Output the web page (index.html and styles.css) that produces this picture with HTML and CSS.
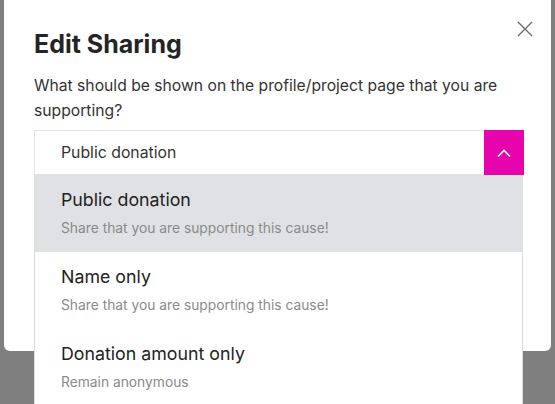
FILE: index.html
```html
<!DOCTYPE html>
<html lang="en">
<head>
    <meta charset="UTF-8">
    <meta name="viewport" content="width=device-width, initial-scale=1.0">
    <title>Edit Sharing</title>
    <link rel="stylesheet" href="styles.css">
</head>
<body>
    <div class="modal">
        <button class="close-btn" aria-label="Close">
            <svg width="16" height="16" viewBox="0 0 16 16">
                <path d="M1 1 L15 15 M15 1 L1 15" stroke="#6b6b6b" stroke-width="1.4" fill="none"/>
            </svg>
        </button>
        <h2 class="modal-title">Edit Sharing</h2>
        <p class="modal-text">What should be shown on the profile/project page that you are supporting?</p>

        <div class="select">
            <div class="select-control">
                <span class="select-value">Public donation</span>
                <span class="select-toggle">
                    <svg width="16" height="10" viewBox="0 0 16 10">
                        <path d="M2 8.5 L8 2.5 L14 8.5" stroke="#ffffff" stroke-width="1.6" fill="none"/>
                    </svg>
                </span>
            </div>
            <ul class="select-menu">
                <li class="option selected">
                    <div class="option-title">Public donation</div>
                    <div class="option-desc">Share that you are supporting this cause!</div>
                </li>
                <li class="option">
                    <div class="option-title">Name only</div>
                    <div class="option-desc">Share that you are supporting this cause!</div>
                </li>
                <li class="option">
                    <div class="option-title">Donation amount only</div>
                    <div class="option-desc">Remain anonymous</div>
                </li>
            </ul>
        </div>
    </div>
</body>
</html>
```

FILE: styles.css
```css
body {
    font-family: Inter, "Noto Sans", sans-serif;
    margin: 0;
    padding: 0;
    background-color: #7f7f7f;
    height: 404px;
    overflow: hidden;
}

.modal {
    position: relative;
    margin: 0 4px;
    width: 547px;
    height: 351px;
    box-sizing: border-box;
    padding: 30px 30px 0 30px;
    background-color: #ffffff;
    border-radius: 0 0 6px 6px;
}

.close-btn {
    position: absolute;
    top: 20px;
    right: 17px;
    width: 18px;
    height: 18px;
    padding: 0;
    border: none;
    background: none;
    cursor: pointer;
    display: flex;
    align-items: center;
    justify-content: center;
}

.modal-title {
    margin: 0;
    font-size: 25px;
    line-height: 28px;
    font-weight: 700;
    color: #242426;
}

.modal-text {
    margin: 15px 0 7px 0;
    font-size: 15.7px;
    line-height: 25px;
    color: #333333;
}

.select {
    position: relative;
    width: 490px;
}

.select-control {
    display: flex;
    height: 45px;
    box-sizing: border-box;
    border: 1px solid #e3e3e3;
    border-right: none;
}

.select-value {
    flex: 1;
    display: flex;
    align-items: center;
    padding-left: 26px;
    font-size: 15.8px;
    color: #333333;
}

.select-toggle {
    width: 40px;
    margin: -1px 0;
    background-color: #e605ac;
    display: flex;
    align-items: center;
    justify-content: center;
}

.select-menu {
    position: absolute;
    top: 45px;
    left: 0;
    width: 489px;
    margin: 0;
    padding: 0;
    list-style: none;
    background-color: #ffffff;
    border-left: 1px solid #dcdcdc;
    border-right: 1px solid #dcdcdc;
    box-sizing: border-box;
}

.option {
    height: 77px;
    box-sizing: border-box;
    padding: 14px 26px 0 26px;
}

.option.selected {
    background-color: #e0e1e4;
}

.option-title {
    font-size: 17.8px;
    line-height: 22px;
    color: #222222;
}

.option-desc {
    margin-top: 9px;
    font-size: 13.8px;
    line-height: 17px;
    color: #8a8a8a;
}
```
